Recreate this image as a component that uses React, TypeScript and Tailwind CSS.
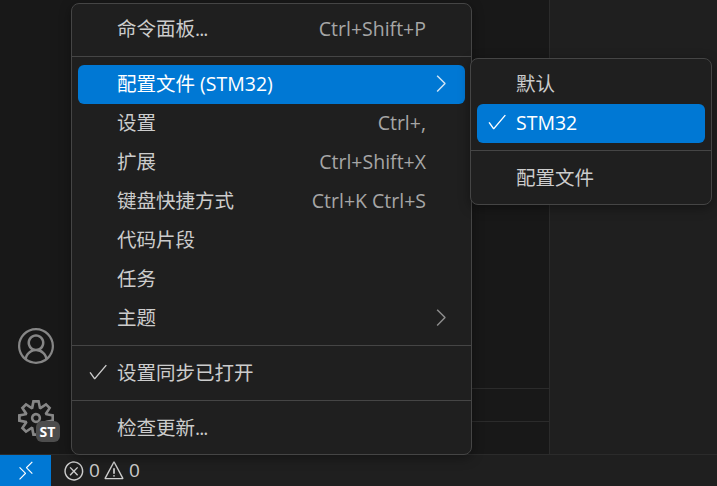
import React from "react";
import {
  VscAccount,
  VscCheck,
  VscChevronRight,
  VscError,
  VscRemote,
  VscSettingsGear,
  VscWarning,
} from "react-icons/vsc";

const font = "font-['Open_Sans','Noto_Sans_CJK_SC',sans-serif]";

type Item = {
  label: string;
  dots?: boolean;
  keys?: string;
  active?: boolean;
  checked?: boolean;
  sub?: boolean;
};

function MenuRow({ label, dots, keys, active, checked, sub }: Item) {
  return (
    <div
      className={`flex h-[39px] items-center rounded-[6px] pb-[2px] ${
        active ? "bg-[#0078d4] text-white" : "text-[#cccccc]"
      }`}
    >
      <span className="flex w-[39px] shrink-0 justify-center pb-[1px]">
        {checked && <VscCheck size={22} />}
      </span>
      <span className="flex-1 whitespace-nowrap">
        {label}
        {dots && <span className="tracking-[-1px]">...</span>}
      </span>
      {keys && <span className="pr-[39px] text-[#a6a6a6]">{keys}</span>}
      {sub && (
        <span className={`flex w-[50px] justify-center ${active ? "text-[#cfe4f5]" : "text-[#8c8c8c]"}`}>
          <VscChevronRight size={27} />
        </span>
      )}
    </div>
  );
}

const Sep = () => <div className="-mx-[6px] mb-[8px] mt-[7px] h-px bg-[#454545]" />;

export default function App() {
  return (
    <div className={`${font} relative flex h-[486px] w-[717px] flex-col overflow-hidden bg-[#1f1f1f] text-[19.5px]`}>
      <div className="flex min-h-0 flex-1">
        {/* activity bar */}
        <div className="flex w-[71px] shrink-0 flex-col items-center justify-end gap-[36px] bg-[#181818] pb-[18px] text-[#868686]">
          <VscAccount size={36} />
          <div className="relative">
            <VscSettingsGear size={36} />
            <span className="absolute left-[18px] top-[21px] flex h-[21px] w-[24px] items-center justify-center rounded-[6px] bg-[#4d4d4d] text-[14px] font-bold leading-none text-white">
              ST
            </span>
          </div>
        </div>
        {/* side bar */}
        <div className="flex w-[478px] shrink-0 flex-col justify-end bg-[#181818]">
          <div className="h-[33px] border-t border-[#2b2b2b]" />
          <div className="h-[33px] border-t border-[#2b2b2b]" />
        </div>
        {/* editor */}
        <div className="flex-1 border-l border-[#2b2b2b] bg-[#1f1f1f]" />
      </div>

      {/* status bar */}
      <div className="flex h-[32px] shrink-0 items-stretch border-t border-[#2b2b2b] bg-[#1f1f1f] text-[19px] text-[#cccccc]">
        <div className="flex w-[51px] items-center justify-center bg-[#0078d4] text-white">
          <VscRemote size={22} />
        </div>
        <div className="flex items-center pl-[12px]">
          <VscError size={22} />
          <span className="ml-[4px] mr-[3px]">0</span>
          <VscWarning size={22} />
          <span className="ml-[4px]">0</span>
        </div>
      </div>

      {/* main menu */}
      <div className="absolute left-[71px] top-[3px] z-10 h-[452px] w-[401px] rounded-[8px] border border-[#454545] bg-[#1f1f1f] px-[6px] pt-[6px] shadow-[0_3px_12px_rgba(0,0,0,0.36)]">
        <MenuRow label="命令面板" dots keys="Ctrl+Shift+P" />
        <Sep />
        <MenuRow label="配置文件 (STM32)" active sub />
        <MenuRow label="设置" keys="Ctrl+," />
        <MenuRow label="扩展" keys="Ctrl+Shift+X" />
        <MenuRow label="键盘快捷方式" keys="Ctrl+K Ctrl+S" />
        <MenuRow label="代码片段" />
        <MenuRow label="任务" />
        <MenuRow label="主题" sub />
        <Sep />
        <MenuRow label="设置同步已打开" checked />
        <Sep />
        <MenuRow label="检查更新" dots />
      </div>

      {/* profiles submenu */}
      <div className="absolute left-[470px] top-[58px] z-20 h-[147px] w-[242px] rounded-[8px] border border-[#454545] bg-[#1f1f1f] px-[6px] pt-[6px] shadow-[0_3px_12px_rgba(0,0,0,0.36)]">
        <MenuRow label="默认" />
        <MenuRow label="STM32" active checked />
        <Sep />
        <MenuRow label="配置文件" />
      </div>
    </div>
  );
}
